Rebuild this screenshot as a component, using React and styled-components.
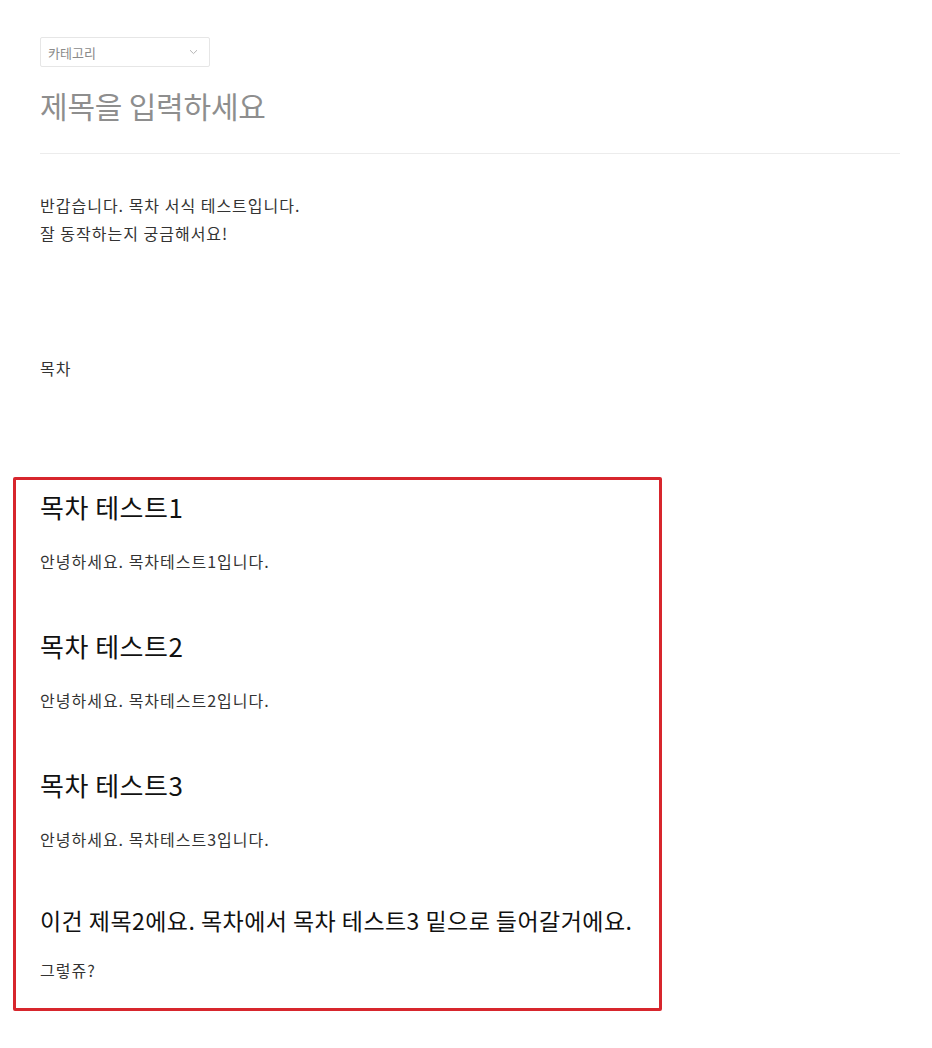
import React from "react";
import styled, { createGlobalStyle } from "styled-components";

const GlobalStyle = createGlobalStyle`
  body {
    margin: 0;
    background: #ffffff;
    font-family: "Noto Sans CJK KR", "Noto Sans", sans-serif;
  }
`;

const sections = [
  { title: "목차 테스트1", text: "안녕하세요. 목차테스트1입니다." },
  { title: "목차 테스트2", text: "안녕하세요. 목차테스트2입니다." },
  { title: "목차 테스트3", text: "안녕하세요. 목차테스트3입니다." },
];

function App() {
  return (
    <>
      <GlobalStyle />
      <Editor>
        <Header>
          <CategorySelect>
            <span>카테고리</span>
            <svg width="9" height="6" viewBox="0 0 9 6" fill="none">
              <path d="M1 1.2 L4.5 4.6 L8 1.2" stroke="#b5b5b5" strokeWidth="1" />
            </svg>
          </CategorySelect>
          <TitleInput>제목을 입력하세요</TitleInput>
        </Header>

        <Body>
          <Text>반갑습니다. 목차 서식 테스트입니다.</Text>
          <Text>잘 동작하는지 궁금해서요!</Text>
          <TocLabel>목차</TocLabel>
        </Body>

        <Highlight>
          {sections.map((s, i) => (
            <Section key={i}>
              <Heading>{s.title}</Heading>
              <Para>{s.text}</Para>
            </Section>
          ))}
          <SubHeading>이건 제목2에요. 목차에서 목차 테스트3 밑으로 들어갈거에요.</SubHeading>
          <Para $gap={20}>그렇쥬?</Para>
        </Highlight>
      </Editor>
    </>
  );
}

export default App;

const Editor = styled.div`
  padding: 37px 0 40px 40px;
  width: 860px;
`;

const Header = styled.div`
  border-bottom: 1px solid #ececec;
  padding-bottom: 28px;
`;

const CategorySelect = styled.div`
  width: 170px;
  height: 30px;
  box-sizing: border-box;
  border: 1px solid #e6e6e6;
  border-radius: 2px;
  display: flex;
  align-items: center;
  justify-content: space-between;
  padding: 0 11px 0 7px;
  font-size: 13px;
  color: #8a8a8a;
`;

const TitleInput = styled.div`
  margin-top: 18px;
  font-size: 30px;
  letter-spacing: -0.2px;
  line-height: 40px;
  color: #8e8e8e;
`;

const Body = styled.div`
  padding-top: 37px;
`;

const Text = styled.p`
  margin: 0;
  font-size: 16px;
  letter-spacing: 1px;
  line-height: 28px;
  color: #333333;
`;

const TocLabel = styled(Text)`
  margin-top: 107px;
`;

const Highlight = styled.div`
  margin: 95px 0 0 -27px;
  width: 649px;
  box-sizing: border-box;
  border: 3px solid #d7262d;
  border-radius: 2px;
  padding: 9px 20px 26px 24px;
`;

const Section = styled.div`
  & + & {
    margin-top: 55px;
  }
`;

const Heading = styled.h2`
  margin: 0;
  font-size: 26px;
  font-weight: 400;
  letter-spacing: 0.5px;
  line-height: 36px;
  color: #111111;
`;

const SubHeading = styled.h3`
  margin: 51px 0 0;
  font-size: 23px;
  font-weight: 400;
  letter-spacing: 0.45px;
  line-height: 36px;
  white-space: nowrap;
  color: #111111;
`;

const Para = styled.p`
  margin: ${(p) => p.$gap ?? 24}px 0 0;
  font-size: 16px;
  letter-spacing: 1px;
  line-height: 24px;
  color: #333333;
`;
